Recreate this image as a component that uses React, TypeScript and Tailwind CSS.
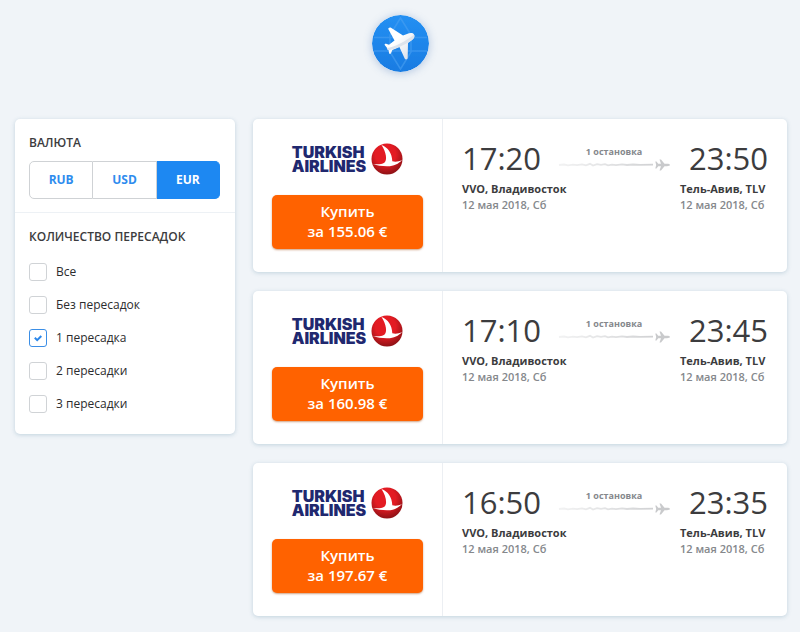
import { useState } from "react";

const tickets = [
  { depart: "17:20", arrive: "23:50", price: "155.06" },
  { depart: "17:10", arrive: "23:45", price: "160.98" },
  { depart: "16:50", arrive: "23:35", price: "197.67" },
];

const currencies = ["RUB", "USD", "EUR"];

const stopOptions = ["Все", "Без пересадок", "1 пересадка", "2 пересадки", "3 пересадки"];

function PlaneLogo() {
  return (
    <svg viewBox="0 0 57 57" className="size-[57px] rounded-full shadow-[0_1px_8px_rgba(60,110,180,0.35)]" aria-hidden="true">
      <defs>
        <linearGradient id="sky" x1="0" y1="0" x2="0" y2="1">
          <stop offset="0" stopColor="#2490f3" />
          <stop offset="1" stopColor="#1a7ce2" />
        </linearGradient>
        <linearGradient id="hull" x1="0" y1="0" x2="1" y2="1">
          <stop offset="0.4" stopColor="#ffffff" />
          <stop offset="1" stopColor="#d3dae6" />
        </linearGradient>
      </defs>
      <circle cx="28.5" cy="28.5" r="28.5" fill="url(#sky)" />
      <g fill="none" stroke="#4aa0f2" strokeWidth="1.500" opacity="0.6">
        <path d="M2 22.500H55M2 36H55" />
        <path d="M28.500 3L18 20V37L28.500 54L39 37V20Z" />
      </g>
      <path
        d="M42 19.500c-1-2-4.500-1.600-7-.6l-4 1.600L19 12.700c-1.200-.8-3.200.2-2.600 1.600l6.100 11.200-5.500 4.200-2.900-1c-.9-.3-1.900.5-1.400 1.300l2.200 2.800c0 1.400.6 2 1.600 2.100l.6 3.400c.3 1 1.500.9 1.900 0l1.400-3.400 7-3 5.400 11.800c.7 1.300 2.800.9 2.900-.6l.3-15 4-3c2.200-1.900 3.200-3.900 2-5.600Z"
        fill="url(#hull)"
      />
      <path d="M14.800 33C23 32 33 26.500 42 19.700c1 1.600 0 3.500-2 5.400C33 30 25 33.500 18 35c-1.800 0-2.800-.6-3.200-2Z" fill="#dde3ec" />
    </svg>
  );
}

function AirlineLogo() {
  return (
    <div className="flex items-center justify-center gap-[5px]">
      <div className="font-[Inter,sans-serif] text-[16px] leading-[14px] font-black text-[#20286f]">
        TURKISH
        <br />
        AIRLINES
      </div>
      <svg viewBox="0 0 32 32" className="size-8 shrink-0" aria-hidden="true">
        <defs>
          <radialGradient id="ball" cx="0.45" cy="0.35" r="0.65">
            <stop offset="0.5" stopColor="#e31b23" />
            <stop offset="1" stopColor="#8f1216" />
          </radialGradient>
        </defs>
        <circle cx="16" cy="16" r="15.500" fill="url(#ball)" />
        <path
          d="M10.500 2C17 4.500 21 10 21.300 18.300c3 .7 6.500.4 9.700-1.300-3.500 4-8.500 6.500-15 6.300-5-.2-10-.8-14.200-2.300 5 .4 9.200.2 11.500-1.300 3.200-2.300 2-10.500-2.800-17.700Z"
          fill="#ffffff"
        />
      </svg>
    </div>
  );
}

function Route() {
  return (
    <svg viewBox="0 0 114 14" className="h-[14px] w-[114px]" aria-hidden="true">
      <defs>
        <linearGradient id="trail" gradientUnits="userSpaceOnUse" x1="0" y1="0" x2="100" y2="0">
          <stop offset="0" stopColor="#d5d6d8" stopOpacity="0.3" />
          <stop offset="1" stopColor="#cfd0d2" />
        </linearGradient>
      </defs>
      <path
        d="M2 7l5-.5 4 .8 5-.7 4 .5 5-.8 4 1 4-1.500 3 1.700 4-1.400 4 .8 4-.8 3 1.200 4-.7 4 .5 6-.8 5 .7 6-.5 7 .3 13-.2"
        fill="none"
        stroke="url(#trail)"
        strokeWidth="1.800"
      />
      <path
        d="M113 7c0-.7-1.500-1.200-3-1.200h-2.500L104 1.500h-1.500l1.500 4.300h-2.800L99.500 3.500h-1.200L99.200 7l-.9 3.500h1.200l1.700-2.300h2.800l-1.500 4.300h1.500l3.500-4.300h2.500c1.500 0 3-.5 3-1.200Z"
        fill="#c9cacc"
      />
    </svg>
  );
}

function Ticket({ depart, arrive, price }: { depart: string; arrive: string; price: string }) {
  return (
    <article className="flex min-h-[153px] rounded-[5px] bg-white shadow-[0_1px_4px_rgba(91,137,163,0.3)]">
      <div className="flex w-[190px] shrink-0 flex-col gap-5 border-r border-[#eceff3] px-[19px] pt-6">
        <AirlineLogo />
        <button className="flex h-[54px] w-full flex-col items-center justify-center rounded-[5px] bg-[#ff6200] pb-[2px] text-[15px] leading-5 font-semibold text-white shadow-[0_1px_2px_rgba(160,70,10,0.5)]">
          <span>Купить</span>
          <span>за {price} €</span>
        </button>
      </div>
      <div className="grid flex-1 grid-cols-[95px_1fr_88px] pt-[19px] pr-[19px] pl-[19px] text-[11px] leading-4 font-semibold whitespace-nowrap">
        <div>
          <div className="text-[31px] leading-10 font-normal text-[#3c3c3e]">{depart}</div>
          <div className="mt-[3px] font-bold text-[#3c3c3e]">VVO, Владивосток</div>
          <div className="text-[#85888c]">12 мая 2018, Сб</div>
        </div>
        <div className="flex w-[114px] flex-col items-center pt-2">
          <span className="text-[9px] leading-3 font-bold text-[#85888c]">1 остановка</span>
          <Route />
        </div>
        <div>
          <div className="text-right text-[31px] leading-10 font-normal text-[#3c3c3e]">{arrive}</div>
          <div className="mt-[3px] font-bold text-[#3c3c3e]">Тель-Авив, TLV</div>
          <div className="text-[#85888c]">12 мая 2018, Сб</div>
        </div>
      </div>
    </article>
  );
}

export default function App() {
  const [currency, setCurrency] = useState("EUR");
  const [stops, setStops] = useState<string[]>(["1 пересадка"]);

  const toggle = (option: string) =>
    setStops(stops.includes(option) ? stops.filter((s) => s !== option) : [...stops, option]);

  return (
    <div className="min-h-screen bg-[#f0f4f8] pt-[15px] pb-[15px] font-['Open_Sans','Noto_Sans',sans-serif] text-[#3c3c3e]">
      <header className="flex justify-center">
        <PlaneLogo />
      </header>
      <div className="mt-[47px] flex items-start gap-[18px] pr-[13px] pl-[15px]">
        <aside className="w-[220px] shrink-0 rounded-[5px] bg-white shadow-[0_1px_4px_rgba(91,137,163,0.3)]">
          <section className="border-b border-[#edf1f5] px-[14px] pt-4 pb-[13px]">
            <h2 className="text-[12px] leading-4 font-semibold">ВАЛЮТА</h2>
            <div className="mt-[10px] flex h-[38px] w-[191px]">
              {currencies.map((code) => (
                <button
                  key={code}
                  onClick={() => setCurrency(code)}
                  aria-pressed={currency === code}
                  className={
                    "flex-1 border border-l-0 text-[12px] font-bold first:rounded-l-[5px] first:border-l last:rounded-r-[5px] " +
                    (currency === code
                      ? "border-[#1d88f2] bg-[#1d88f2] text-white"
                      : "border-[#cfd2d5] bg-white text-[#2f8cee]")
                  }
                >
                  {code}
                </button>
              ))}
            </div>
          </section>
          <section className="px-[14px] pt-4 pb-[21px]">
            <h2 className="text-[12px] leading-4 font-semibold">КОЛИЧЕСТВО ПЕРЕСАДОК</h2>
            <div className="mt-[18px] flex flex-col gap-[15px]">
              {stopOptions.map((option) => (
                <label key={option} className="flex h-[18px] items-center gap-[9px] text-[12px] leading-[18px] text-[#2c2c2e]">
                  <span className="relative flex size-[18px]">
                    <input
                      type="checkbox"
                      checked={stops.includes(option)}
                      onChange={() => toggle(option)}
                      className="peer size-[18px] appearance-none rounded-[3px] border border-[#d0d3d6] bg-white checked:border-[#3b8ee6]"
                    />
                    <svg
                      viewBox="0 0 18 18"
                      className="pointer-events-none absolute inset-0 hidden size-[18px] peer-checked:block"
                      aria-hidden="true"
                    >
                      <path d="M5.800 8.700l2.400 2.400L12.300 7" fill="none" stroke="#2b87ea" strokeWidth="2" />
                    </svg>
                  </span>
                  {option}
                </label>
              ))}
            </div>
          </section>
        </aside>
        <main className="flex flex-1 flex-col gap-[19px]">
          {tickets.map((ticket) => (
            <Ticket key={ticket.price} {...ticket} />
          ))}
        </main>
      </div>
    </div>
  );
}
